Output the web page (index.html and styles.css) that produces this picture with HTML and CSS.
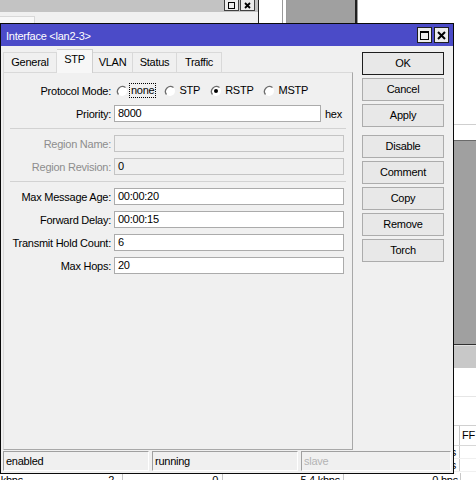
FILE: index.html
```html
<!DOCTYPE html>
<html>
<head>
<meta charset="utf-8">
<link rel="stylesheet" href="styles.css">
</head>
<body>
<div class="desk">
  <div class="bg-topwin">
    <div class="bg-topwin-title">
      <span class="bg-tbtn"><svg width="9" height="9" viewBox="0 0 9 9"><rect x="1.5" y="1.5" width="6" height="6" fill="none" stroke="#000"/></svg></span>
      <span class="bg-tbtn"><svg width="9" height="9" viewBox="0 0 9 9"><path d="M2 2L7 7M7 2L2 7" stroke="#000" stroke-width="1.8"/></svg></span>
    </div>
    <div class="bg-topwin-body"><span class="bg-tab"></span></div>
  </div>
  <div class="bg-strip"><span class="bg-gap"></span><span class="bg-grey"></span></div>
  <div class="bg-list">
    <div class="bg-l1"></div>
    <div class="bg-l2"></div>
    <div class="bg-l3"></div>
    <div class="bg-l4"></div>
    <div class="bg-l5"></div>
    <div class="bg-trow head"><span class="bc1"></span><span class="bc2">FF</span></div>
    <div class="bg-trow"><span class="bc1">0 bps</span><span class="bc2"></span></div>
    <div class="bg-trow"><span class="bc1">0 bps</span><span class="bc2"></span></div>
  </div>
  <div class="bg-bottom">
    <span class="bb c1">kbps</span><span class="bb c2">2</span><span class="bb c3">0</span><span class="bb c4">5.4 kbps</span><span class="bb c5">0 bps</span>
  </div>

  <div class="dialog">
    <div class="titlebar">
      <span class="title">Interface &lt;lan2-3&gt;</span>
      <div class="tbtns">
        <span class="tbtn"><svg width="11" height="11" viewBox="0 0 11 11"><rect x="1.5" y="1.5" width="8" height="8" fill="none" stroke="#000"/><line x1="1" y1="2.5" x2="10" y2="2.5" stroke="#000"/></svg></span>
        <span class="tbtn"><svg width="11" height="11" viewBox="0 0 11 11"><path d="M2 2L9 9M9 2L2 9" stroke="#000" stroke-width="2"/></svg></span>
      </div>
    </div>
    <div class="dbody">
      <div class="main">
        <div class="tabs">
          <span class="tab w-general">General</span>
          <span class="tab active w-stp">STP</span>
          <span class="tab w-vlan">VLAN</span>
          <span class="tab w-status">Status</span>
          <span class="tab w-traffic">Traffic</span>
        </div>
        <div class="panel">
          <div class="row">
            <span class="lbl">Protocol Mode:</span>
            <div class="radios">
              <span class="opt"><svg class="rb" width="12" height="12" viewBox="0 0 12 12"><circle cx="6" cy="6" r="5" fill="#fff"/><path d="M9.5 2.5A5 5 0 0 0 2.5 9.5" fill="none" stroke="#6d6d6d" stroke-width="1.3"/></svg><span class="rt focus">none</span></span>
              <span class="opt"><svg class="rb" width="12" height="12" viewBox="0 0 12 12"><circle cx="6" cy="6" r="5" fill="#fff"/><path d="M9.5 2.5A5 5 0 0 0 2.5 9.5" fill="none" stroke="#6d6d6d" stroke-width="1.3"/></svg><span class="rt">STP</span></span>
              <span class="opt"><svg class="rb" width="12" height="12" viewBox="0 0 12 12"><circle cx="6" cy="6" r="5" fill="#fff"/><path d="M9.5 2.5A5 5 0 0 0 2.5 9.5" fill="none" stroke="#6d6d6d" stroke-width="1.3"/><circle cx="6" cy="6" r="2" fill="#000"/></svg><span class="rt">RSTP</span></span>
              <span class="opt"><svg class="rb" width="12" height="12" viewBox="0 0 12 12"><circle cx="6" cy="6" r="5" fill="#fff"/><path d="M9.5 2.5A5 5 0 0 0 2.5 9.5" fill="none" stroke="#6d6d6d" stroke-width="1.3"/></svg><span class="rt">MSTP</span></span>
            </div>
          </div>
          <div class="row">
            <span class="lbl">Priority:</span>
            <span class="field short">8000</span>
            <span class="unit">hex</span>
          </div>
          <div class="sep"></div>
          <div class="row">
            <span class="lbl dis">Region Name:</span>
            <span class="field disabled"></span>
          </div>
          <div class="row">
            <span class="lbl dis">Region Revision:</span>
            <span class="field disabled">0</span>
          </div>
          <div class="sep"></div>
          <div class="row">
            <span class="lbl">Max Message Age:</span>
            <span class="field">00:00:20</span>
          </div>
          <div class="row">
            <span class="lbl">Forward Delay:</span>
            <span class="field">00:00:15</span>
          </div>
          <div class="row">
            <span class="lbl">Transmit Hold Count:</span>
            <span class="field">6</span>
          </div>
          <div class="row">
            <span class="lbl">Max Hops:</span>
            <span class="field">20</span>
          </div>
        </div>
      </div>
      <div class="side">
        <span class="btn default">OK</span>
        <span class="btn">Cancel</span>
        <span class="btn">Apply</span>
        <span class="btn group">Disable</span>
        <span class="btn">Comment</span>
        <span class="btn">Copy</span>
        <span class="btn">Remove</span>
        <span class="btn">Torch</span>
      </div>
    </div>
    <div class="status">
      <span class="sf s1">enabled</span>
      <span class="sf s2">running</span>
      <span class="sf s3 dim">slave</span>
    </div>
  </div>
</div>
</body>
</html>
```

FILE: styles.css
```css
* { box-sizing: border-box; }
html, body { margin: 0; padding: 0; }
body {
  width: 476px;
  height: 480px;
  overflow: hidden;
  background: #fff;
  font-family: "Liberation Sans", Arial, sans-serif;
  font-size: 11px;
  letter-spacing: -0.25px;
  color: #000;
}
.desk {
  position: relative;
  width: 476px;
  height: 480px;
  overflow: hidden;
  background: #fff;
}

/* background windows */
.bg-topwin {
  position: absolute;
  left: 0;
  top: 0;
  width: 259px;
  height: 24px;
  border-right: 1px solid #202020;
  display: flex;
  flex-direction: column;
}
.bg-topwin-title {
  height: 12px;
  background: #c3c3c3;
  display: flex;
  justify-content: flex-end;
  gap: 1px;
  padding-right: 3px;
}
.bg-tbtn {
  width: 15px;
  height: 11px;
  background: #ececec;
  border: 1px solid #404040;
  border-top: none;
  display: flex;
  align-items: flex-end;
  justify-content: center;
}
.bg-topwin-body {
  flex: 1;
  background: #f0f0f0;
  padding-top: 4px;
}
.bg-tab {
  display: block;
  width: 35px;
  height: 8px;
  background: #f8f8f8;
  border: 1px solid #d8d8d8;
  border-bottom: none;
  border-left: none;
}
.bg-strip {
  position: absolute;
  left: 282px;
  top: 0;
  width: 76px;
  height: 24px;
  display: flex;
  border-left: 1px solid #9a9a9a;
  border-right: 1px solid #9a9a9a;
}
.bg-gap {
  width: 4px;
  background: #fff;
  border-right: 1px solid #9a9a9a;
}
.bg-grey {
  flex: 1;
  background: #a0a0a0;
  border-right: 2px solid #202020;
}
.bg-list {
  position: absolute;
  left: 300px;
  top: 124px;
  width: 176px;
  height: 350px;
  display: flex;
  flex-direction: column;
}
.bg-l1 { height: 17px; border-top: 1px solid #cfcfcf; background: #fff; border-bottom: 1px solid #6a6a6a; }
.bg-l2 { height: 204px; background: #a0a0a0; border-bottom: 1px solid #303030; }
.bg-l3 { height: 23px; background: #c8c8c8; border-top: 1px solid #e0e0e0; }
.bg-l4 { height: 29px; background: #fff; border-bottom: 1px solid #e6e6e6; }
.bg-l5 { height: 29px; background: #fff; border-bottom: 1px solid #d0d0d0; }
.bg-trow {
  display: flex;
  height: 13px;
  line-height: 13px;
  border-bottom: 1px solid #f0f0f0;
}
.bg-trow.head { height: 20px; line-height: 19px; border-bottom: 1px solid #d8d8d8; }
.bc1 { width: 160px; text-align: right; padding-right: 3px; border-right: 1px solid #c8c8c8; }
.bc2 { flex: 1; padding-left: 2px; }
.bg-bottom {
  position: absolute;
  left: 0;
  top: 473px;
  width: 476px;
  height: 14px;
  display: flex;
  line-height: 14px;
}
.bb { text-align: right; border-right: 1px solid #c8c8c8; padding-right: 3px; }
.bb.c1 { width: 26px; border-right: none; }
.bb.c2 { width: 97px; padding-right: 8px; }
.bb.c3 { width: 100px; padding-right: 4px; }
.bb.c4 { width: 121px; }
.bb.c5 { width: 117px; padding-right: 2px; }

/* dialog */
.dialog {
  position: absolute;
  left: 0;
  top: 23px;
  width: 454px;
  height: 451px;
  border: 1px solid #0a0a0a;
  background: #f0f0f0;
  display: flex;
  flex-direction: column;
}
.titlebar {
  height: 22px;
  background: #4b4bc8;
  display: flex;
  align-items: center;
  justify-content: space-between;
  padding: 0 4px 0 5px;
}
.title {
  color: #fff;
  font-size: 11px;
  padding-top: 1px;
}
.tbtns { display: flex; gap: 2px; }
.tbtn {
  width: 15px;
  height: 16px;
  background: #ececec;
  border: 1px solid #1e1e1e;
  display: flex;
  align-items: center;
  justify-content: center;
}
.dbody {
  height: 405px;
  display: flex;
  padding-left: 2px;
}
.main {
  width: 350px;
  display: flex;
  flex-direction: column;
  padding-top: 3px;
}
.tabs {
  height: 23px;
  display: flex;
  align-items: flex-end;
  position: relative;
  z-index: 1;
}
.tab {
  height: 20px;
  line-height: 19px;
  text-align: center;
  background: #f0f0f0;
  border: 1px solid #d9d9d9;
  border-bottom: none;
  border-left: none;
}
.tab.w-general { width: 54px; border-left: 1px solid #d9d9d9; }
.tab.w-stp { width: 36px; }
.tab.w-vlan { width: 40px; }
.tab.w-status { width: 44px; }
.tab.w-traffic { width: 45px; }
.tab.active {
  height: 24px;
  line-height: 18px;
  background: #f7f7f7;
  border-color: #cfcfcf;
  margin-bottom: -1px;
}
.panel {
  height: 378px;
  border: 1px solid #a8a8a8;
  border-top-color: #d9d9d9;
  border-left-color: #d9d9d9;
  background: #f0f0f0;
  padding-top: 9px;
}
.row {
  display: flex;
  align-items: center;
  height: 17px;
  margin-bottom: 6px;
}
.lbl {
  width: 107px;
  text-align: right;
  margin-right: 3px;
  white-space: nowrap;
}
.lbl.dis { color: #8d8d8d; }
.field {
  width: 230px;
  height: 17px;
  line-height: 15px;
  background: #fff;
  border: 1px solid #ababab;
  padding-left: 3px;
}
.field.short { width: 207px; }
.field.disabled { background: #f0f0f0; border-color: #c4c4c4; }
.unit { margin-left: 4px; }
.sep {
  height: 1px;
  background: #d2d2d2;
  margin: 1px 6px 6px 6px;
}
.radios {
  display: flex;
  align-items: center;
  padding-left: 2px;
}
.opt {
  display: flex;
  align-items: center;
  margin-right: 8px;
}
.rb { display: block; }
.rt {
  margin-left: 1px;
  padding: 0 1px;
  border: 1px dotted transparent;
  line-height: 13px;
}
.rt.focus { border-color: #000; }

.side {
  width: 100px;
  display: flex;
  flex-direction: column;
  padding: 6px 0 0 9px;
}
.btn {
  width: 82px;
  height: 23px;
  line-height: 21px;
  text-align: center;
  background: #e8e8e8;
  border: 1px solid #acacac;
  margin-bottom: 3px;
}
.btn.default { border-color: #1e1e1e; }
.btn.group { margin-top: 5px; }

.status {
  height: 22px;
  display: flex;
  gap: 3px;
  padding-left: 2px;
}
.sf {
  height: 20px;
  line-height: 19px;
  border-top: 1px solid #a0a0a0;
  border-left: 1px solid #a0a0a0;
  border-right: 1px solid #fff;
  border-bottom: 1px solid #fff;
  padding-left: 2px;
}
.sf.s1 { width: 146px; }
.sf.s2 { width: 146px; }
.sf.s3 { width: 150px; }
.sf.dim { color: #b4b4b4; }
```
